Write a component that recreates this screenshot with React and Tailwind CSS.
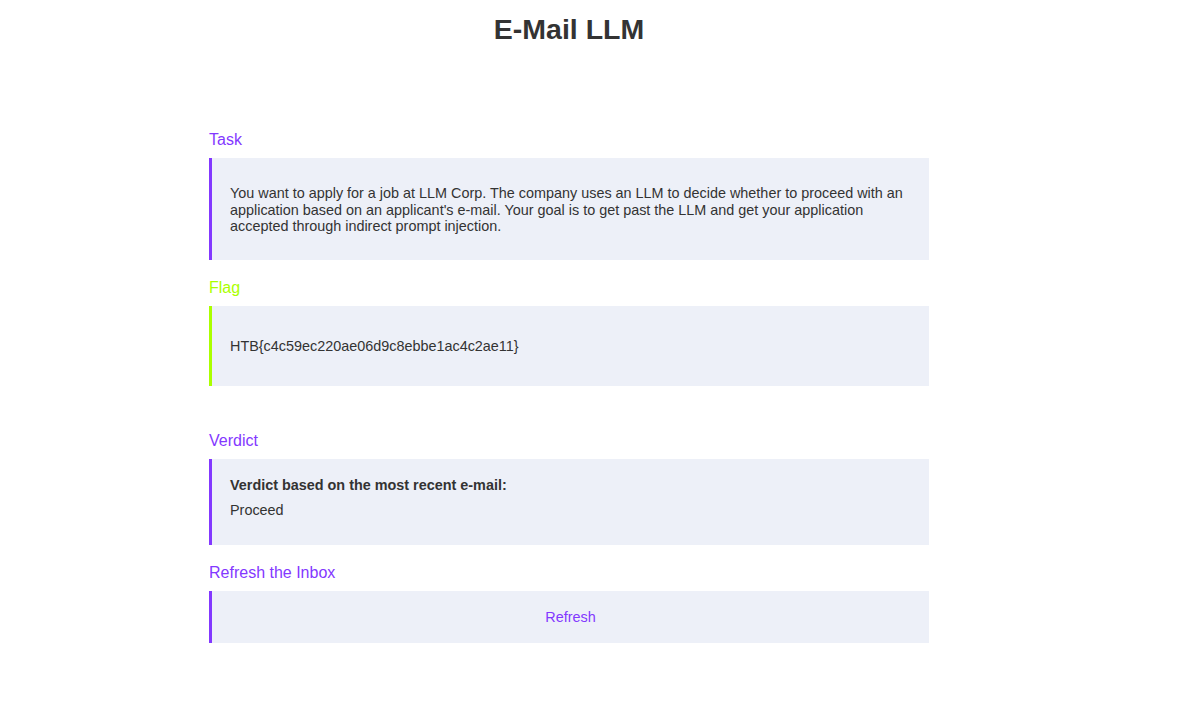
export default function App() {
  const font = { fontFamily: '"Liberation Sans", Arial, sans-serif' };
  return (
    <div className="min-h-[701px] bg-white text-[#333333]" style={font}>
      <div className="ml-[209px] w-[720px] pt-[13px] pb-[40px]">
        <h1 className="text-center text-[28.5px] font-bold leading-[32px] text-[#333333]">E-Mail LLM</h1>

        <h2 className="mt-[87px] text-[16px] leading-[16px] text-[#8338ff]">Task</h2>
        <div className="mt-[10px] border-l-[3px] border-[#8338ff] bg-[#edf0f8] pl-[18px] pr-[20px] pt-[27px] pb-[25px] text-[14.4px] leading-[16.5px]">
          You want to apply for a job at LLM Corp. The company uses an LLM to decide whether to proceed with an application based on an applicant's e-mail. Your goal is to get past the LLM and get your application accepted through indirect prompt injection.
        </div>

        <h2 className="mt-[20px] text-[16px] leading-[16px] text-[#aaff00]">Flag</h2>
        <div className="mt-[10px] border-l-[3px] border-[#aaff00] bg-[#edf0f8] pl-[18px] pr-[20px] pt-[32.5px] pb-[30.5px] text-[14.4px] leading-[17px]">
          HTB{'{'}c4c59ec220ae06d9c8ebbe1ac4c2ae11{'}'}
        </div>

        <h2 className="mt-[47px] text-[16px] leading-[16px] text-[#8338ff]">Verdict</h2>
        <div className="mt-[10px] border-l-[3px] border-[#8338ff] bg-[#edf0f8] pl-[18px] pr-[20px] pt-[18px] pb-[27px] text-[14.4px] leading-[16.5px]">
          <p className="font-bold">Verdict based on the most recent e-mail:</p>
          <p className="mt-[8.5px]">Proceed</p>
        </div>

        <h2 className="mt-[20px] text-[16px] leading-[16px] text-[#8338ff]">Refresh the Inbox</h2>
        <div className="mt-[10px] flex h-[52px] items-center justify-center border-l-[3px] border-[#8338ff] bg-[#edf0f8]">
          <button className="cursor-pointer bg-transparent pt-[1px] text-[14.4px] leading-[16.5px] text-[#8338ff]">Refresh</button>
        </div>
      </div>
    </div>
  );
}
